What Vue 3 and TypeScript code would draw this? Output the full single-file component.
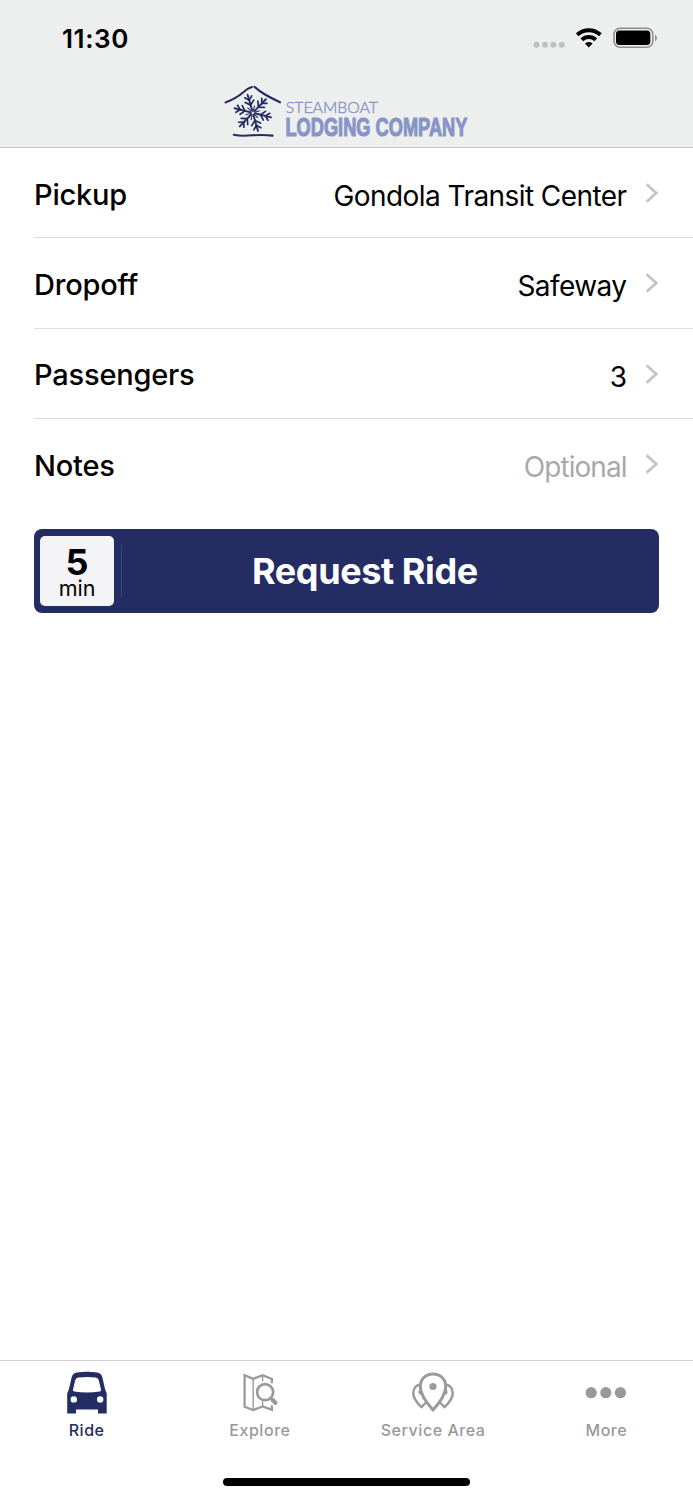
<script setup lang="ts">
interface Row {
  label: string
  value: string
  muted?: boolean
}

const rows: Row[] = [
  { label: 'Pickup', value: 'Gondola Transit Center' },
  { label: 'Dropoff', value: 'Safeway' },
  { label: 'Passengers', value: '3' },
  { label: 'Notes', value: 'Optional', muted: true },
]

const arms: number[] = [14, 74, 134, 194, 254, 314]
</script>

<template>
  <main class="screen">
    <header class="header">
      <div class="status">
        <span class="time">11:30</span>
        <svg class="indicators" width="126" height="24" viewBox="0 0 126 24">
          <g fill="#bfc0c0">
            <circle cx="6.5" cy="18.8" r="3" />
            <circle cx="15" cy="18.8" r="3" />
            <circle cx="23.3" cy="18.8" r="3" />
            <circle cx="31.8" cy="18.8" r="3" />
          </g>
          <g fill="none" stroke="#000" stroke-width="4">
            <path d="M47.2 8.8 A16.8 16.8 0 0 1 70.4 8.8" />
            <path d="M51.8 13.8 A10 10 0 0 1 65.8 13.8" />
          </g>
          <path d="M55 17.5 Q58.8 14.7 62.6 17.5 L58.8 21.4 Z" />
          <rect x="84" y="2.3" width="38.8" height="19" rx="6" fill="none" stroke="#8e8f8f" stroke-width="1.6" />
          <rect x="86" y="4.5" width="34.3" height="14.6" rx="3.6" />
          <path d="M125 8.5 Q129 12 125 15.5 Z" fill="#8e8f8f" />
        </svg>
      </div>
      <svg class="logo" width="260" height="66" viewBox="220 80 260 66">
        <g fill="none" stroke="#242c64" stroke-linecap="round">
          <path d="M225.5 102.5 Q236 98.5 243 92.5 Q248 88 252 87" stroke-width="2.1" />
          <path d="M254.5 86.8 Q259 91 265 94.5 Q272 98.5 280 102.3" stroke-width="2.1" />
          <path d="M233.8 134.8 Q241 136.3 252 135.3 Q264 134.6 272.6 135.6" stroke-width="2.1" />
          <g transform="translate(252.8 112.8)">
            <g v-for="angle in arms" :key="angle" :transform="`rotate(${angle})`">
              <path d="M2 0 H18.8" stroke-width="1.9" />
              <path d="M8 0 L12 -4.5 M8 0 L12 4.5 M13 0 L16.6 -3.6 M13 0 L16.6 3.6" stroke-width="1.7" />
              <path d="M2.4 1.4 L6.1 3.5" stroke-width="1.1" />
            </g>
          </g>
        </g>
        <text class="logo-top" x="285.8" y="113" textLength="92.2" lengthAdjust="spacingAndGlyphs">STEAMBOAT</text>
        <text class="logo-bottom" x="285.4" y="135.8" textLength="182" lengthAdjust="spacingAndGlyphs">LODGING COMPANY</text>
      </svg>
    </header>

    <section class="rows">
      <div v-for="row in rows" :key="row.label" class="row">
        <span class="label">{{ row.label }}</span>
        <span class="value" :class="{ muted: row.muted }">{{ row.value }}</span>
        <svg class="chevron" width="14" height="22" viewBox="0 0 14 22">
          <path d="M1.6 2.2 L11.2 11 L1.6 19.8" fill="none" stroke="#c5c5c7" stroke-width="2.9" />
        </svg>
      </div>
    </section>

    <button class="request" type="button">
      <span class="eta"><b>5</b><span>min</span></span>
      <span class="divider"></span>
      <span class="request-label">Request Ride</span>
    </button>

    <nav class="tabs">
      <div class="tab active">
        <svg width="44" height="44" viewBox="0 0 44 44">
          <path fill="#242c64" fill-rule="evenodd" d="M12 1.5 Q22 0 32 1.5 Q36.3 2.2 37.4 6.5 L40 18 L41.7 22.5 V42.5 H33 V38.5 H11 V42.5 H2.2 V22.5 L4 18 L6.6 6.5 Q7.7 2.2 12 1.5 Z M13.5 6.5 Q22 5.4 30.5 6.5 Q33 6.8 33.7 9 L36 18.5 Q36.4 20.3 34.7 20.5 Q22 22.6 9.3 20.5 Q7.6 20.3 8 18.5 L10.3 9 Q11 6.8 13.5 6.5 Z" />
          <circle cx="8.8" cy="28.4" r="3.2" fill="#fff" />
          <circle cx="35.2" cy="28.4" r="3.2" fill="#fff" />
        </svg>
        <span>Ride</span>
      </div>
      <div class="tab">
        <svg width="44" height="44" viewBox="-1.4 0.8 44 44" fill="none" stroke="#9a9a9a">
          <path d="M32.5 13 V8.8 L23.2 5 L13.8 8.7 L5.2 5 V36.5 L13.8 39.8 L23.2 36.2 L32.5 39.6 V35" stroke-width="2.3" />
          <path d="M13.8 9 V39 M23.2 5 V11 M23.2 31 V36" stroke-width="1.4" />
          <circle cx="25.7" cy="22" r="8" stroke-width="2.7" />
          <path d="M31.5 28 L33.7 30" stroke-width="2" />
          <path d="M33.2 29.8 L36 32.6" stroke-width="4.4" stroke-linecap="round" />
        </svg>
        <span>Explore</span>
      </div>
      <div class="tab">
        <svg width="44" height="44" viewBox="0 0.5 44 44" fill="none" stroke="#9a9a9a">
          <path d="M9.5 14 C5 14.5 2.3 18 2.3 22.5 C2.3 28 6.5 33 10.5 36.6 L15 32" stroke-width="2.5" />
          <path d="M34.5 14 C39 14.5 41.7 18 41.7 22.5 C41.7 28 37.5 33 33.5 36.6 L29 32" stroke-width="2.5" />
          <path d="M22 39.4 C17 34 9.3 25 9.3 16 C9.3 8.6 14.6 3.6 22 3.6 S34.7 8.6 34.7 16 C34.7 25 27 34 22 39.4 Z" stroke-width="3" />
          <circle cx="22" cy="16" r="3.6" fill="#9a9a9a" stroke="none" />
          <path d="M8.8 19 A3 3 0 0 0 8.8 24 L11 24 L10 19 Z M35.2 19 A3 3 0 0 1 35.2 24 L33 24 L34 19 Z" fill="#9a9a9a" stroke="none" />
        </svg>
        <span>Service Area</span>
      </div>
      <div class="tab">
        <svg width="44" height="44" viewBox="0 0 44 44" fill="#999">
          <circle cx="7.2" cy="21.7" r="5.6" />
          <circle cx="21.8" cy="21.7" r="5.6" />
          <circle cx="36.4" cy="21.7" r="5.6" />
        </svg>
        <span>More</span>
      </div>
    </nav>
    <div class="home"></div>
  </main>
</template>

<style>
body {
  background: #fff;
}
</style>

<style scoped>
.screen {
  display: flex;
  flex-direction: column;
  width: 693px;
  height: 1500px;
  overflow: hidden;
  background: #fff;
  color: #000;
  font-family: Inter, "Liberation Sans", sans-serif;
}
.header {
  box-sizing: border-box;
  height: 148px;
  flex: none;
  display: flex;
  flex-direction: column;
  background: #edefee;
  border-bottom: 1px solid #c8caca;
}
.status {
  display: flex;
  justify-content: space-between;
  height: 80px;
  box-sizing: border-box;
  padding: 26px 33px 0 62px;
}
.time {
  font-size: 26px;
  line-height: 26px;
  font-weight: 600;
  letter-spacing: 0.6px;
}
.indicators {
  overflow: visible;
  margin-right: 4px;
}
.logo {
  margin-left: 220px;
  overflow: visible;
}
.logo-top {
  font-family: Lato, sans-serif;
  font-size: 16.5px;
  font-weight: 300;
  fill: #8794c6;
  stroke: #8794c6;
  stroke-width: 0.4px;
}
.logo-bottom {
  font-family: "Liberation Sans", sans-serif;
  font-size: 25.5px;
  font-weight: 700;
  fill: #8794c6;
  stroke: #8794c6;
  stroke-width: 1.1px;
}
.rows {
  padding-left: 34px;
}
.row {
  box-sizing: border-box;
  display: flex;
  align-items: center;
  height: 90.33px;
  padding-right: 34px;
  border-bottom: 1px solid #dedede;
}
.row:last-child {
  border-bottom-color: transparent;
}
.label {
  font-size: 29px;
  font-weight: 500;
  line-height: 36px;
  margin-top: 4px;
  letter-spacing: -0.2px;
}
.value {
  margin-left: auto;
  margin-top: 6.4px;
  font-size: 28px;
  line-height: 36px;
  letter-spacing: -0.57px;
}
.value.muted {
  color: #a9a9a9;
  letter-spacing: -0.95px;
}
.chevron {
  margin-left: 18.5px;
  margin-top: 1px;
}
.request {
  box-sizing: border-box;
  display: flex;
  align-items: center;
  width: 625px;
  height: 84px;
  flex: none;
  margin: 20px 0 0 34px;
  padding: 0 0 0 6px;
  border: 0;
  border-radius: 8px;
  background: #242c64;
  color: #fff;
  font-family: inherit;
}
.eta {
  display: flex;
  flex-direction: column;
  align-items: center;
  box-sizing: border-box;
  width: 74px;
  height: 70px;
  padding-top: 9px;
  border-radius: 5px;
  background: #f4f4f6;
  color: #000;
}
.eta b {
  font-size: 36px;
  line-height: 34px;
  font-weight: 700;
}
.eta span {
  font-size: 21.5px;
  line-height: 19px;
}
.divider {
  width: 1px;
  height: 52px;
  margin-left: 7px;
  background: #3f4777;
}
.request-label {
  margin-left: 130px;
  font-size: 36px;
  line-height: 44px;
  font-weight: 700;
  letter-spacing: -0.4px;
  white-space: nowrap;
}
.tabs {
  display: flex;
  box-sizing: border-box;
  height: 117px;
  margin-top: auto;
  border-top: 1px solid #cfcfcf;
}
.tab {
  flex: 1;
  display: flex;
  flex-direction: column;
  align-items: center;
  padding-top: 10px;
  color: #999;
  font-size: 16px;
  line-height: 22px;
  font-weight: 500;
  letter-spacing: 0.55px;
}
.tab span {
  margin-top: 4px;
}
.tab.active {
  color: #242c64;
}
.home {
  flex: none;
  width: 247px;
  height: 8px;
  margin: 1px auto 14px;
  border-radius: 4px;
  background: #000;
}
</style>
